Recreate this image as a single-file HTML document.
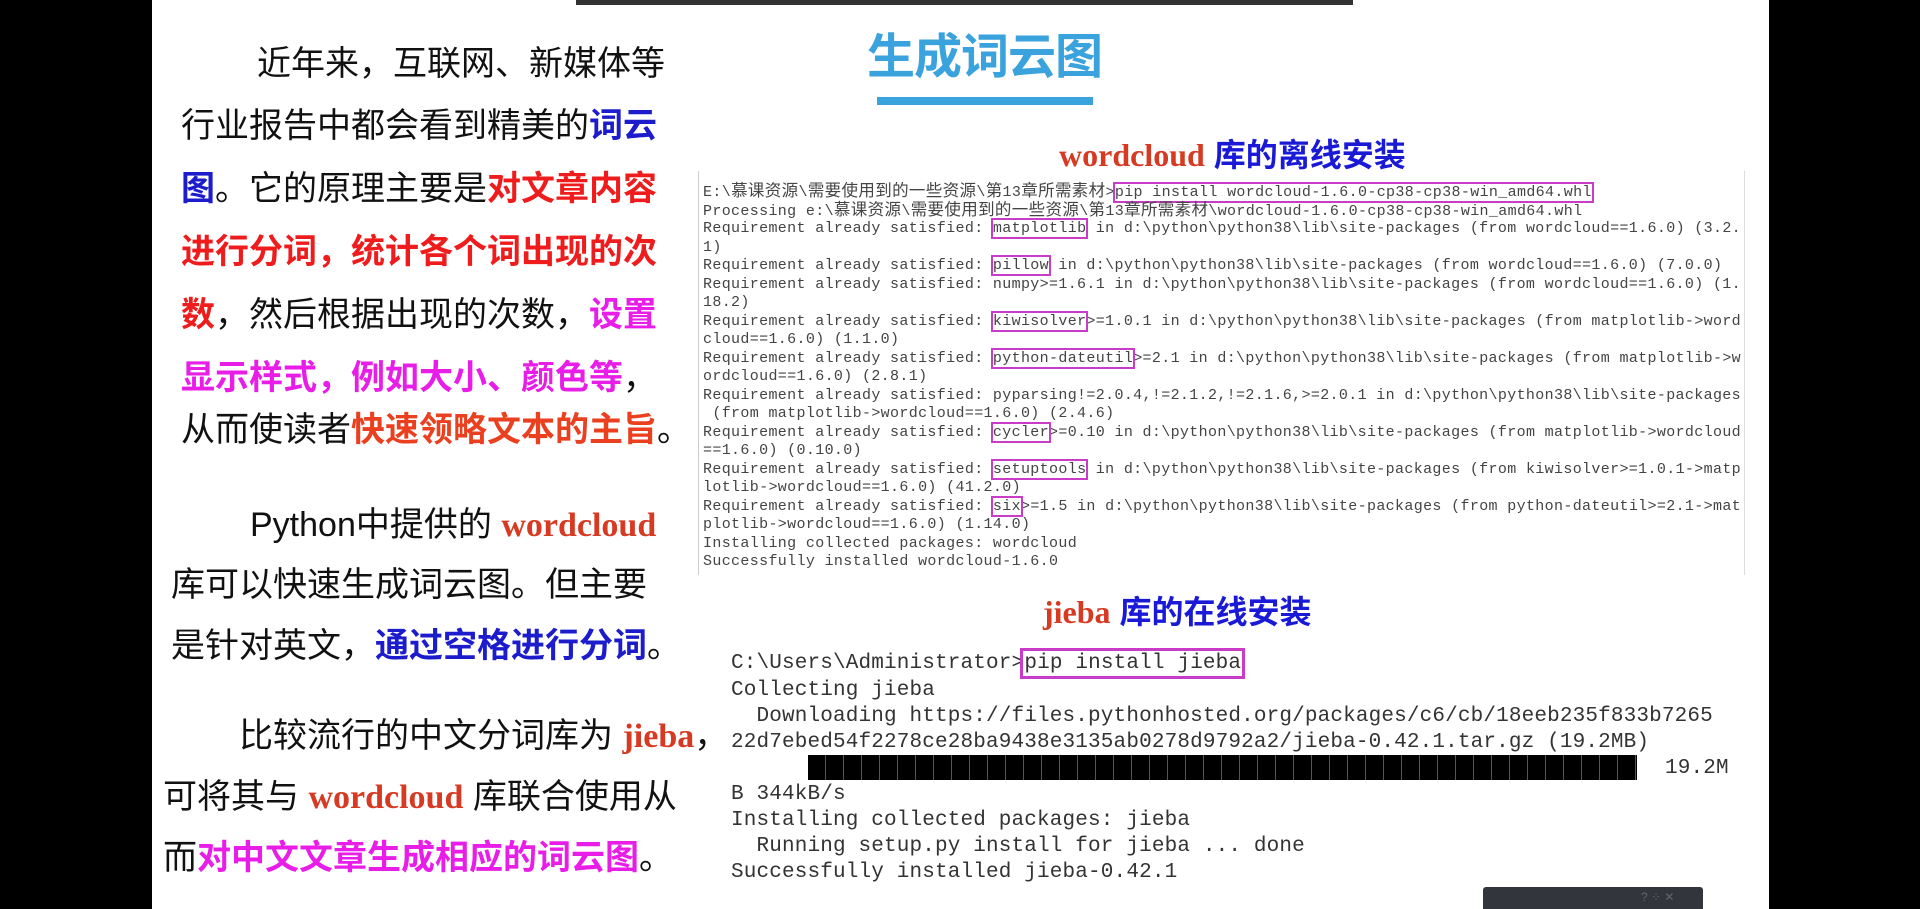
<!DOCTYPE html>
<html><head><meta charset="utf-8"><style>
*{margin:0;padding:0;box-sizing:border-box}
body{width:1920px;height:909px;background:#000;position:relative;overflow:hidden;font-family:"Liberation Sans","Noto Sans CJK SC",sans-serif}
#slide{position:absolute;left:152px;top:0;width:1617px;height:909px;background:#fff}
.abs{position:absolute;white-space:nowrap}
.l{position:absolute;white-space:nowrap;font-size:34px;color:#111;line-height:40px}
.b{color:#1c1ccc;font-weight:bold}
.r{color:#ee1c1c;font-weight:bold}
.m{color:#e81ee8;font-weight:bold}
.o{color:#ea4020;font-weight:bold}
.wc{color:#d63a22;font-weight:bold;font-family:"Liberation Serif",serif}
.t1{position:absolute;left:698px;top:171px;width:1047px;height:404px;border-left:1px solid #ccc;border-right:1px solid #ddd}
.t1 div{font-family:"Liberation Mono",monospace;font-size:15px;letter-spacing:0.35px;line-height:18.55px;color:#444;white-space:pre;position:absolute;left:4px}
.t1 i{font-style:normal;font-size:16.5px}
.bx{outline:2px solid #c83cc8;outline-offset:0}
.t2 div{font-family:"Liberation Mono",monospace;font-size:21px;letter-spacing:0.15px;color:#333;white-space:pre;position:absolute;left:731px;line-height:26px}
</style></head><body>
<div id="slide"></div>
<div class="abs" style="left:576px;top:0;width:777px;height:5px;background:#333"></div>

<div class="abs" style="left:867px;top:28px;font-size:48px;font-weight:bold;color:#3aa2dc;line-height:60px;letter-spacing:-1px">生成词云图</div>
<div class="abs" style="left:877px;top:97px;width:216px;height:8px;background:#3aa2dc"></div>
<div class="abs" style="left:1059px;top:135px;font-size:32px;line-height:40px"><span class="wc">wordcloud</span> <span class="b" style="color:#1a1ad6">库的离线安装</span></div>

<div class="l" style="left:257px;top:44px">近年来，互联网、新媒体等</div>
<div class="l" style="left:181px;top:106px">行业报告中都会看到精美的<span class="b">词云</span></div>
<div class="l" style="left:181px;top:169px"><span class="b">图</span>。它的原理主要是<span class="r">对文章内容</span></div>
<div class="l" style="left:181px;top:232px"><span class="r">进行分词，统计各个词出现的次</span></div>
<div class="l" style="left:181px;top:295px"><span class="r">数</span>，然后根据出现的次数，<span class="m">设置</span></div>
<div class="l" style="left:181px;top:358px"><span class="m">显示样式，例如大小、颜色等</span>，</div>
<div class="l" style="left:181px;top:410px">从而使读者<span class="o">快速领略文本的主旨</span>。</div>

<div class="l" style="left:250px;top:505px">Python中提供的 <span class="wc">wordcloud</span></div>
<div class="l" style="left:171px;top:565px">库可以快速生成词云图。但主要</div>
<div class="l" style="left:171px;top:626px">是针对英文，<span class="b">通过空格进行分词</span>。</div>

<div class="l" style="left:239px;top:716px">比较流行的中文分词库为 <span class="wc">jieba</span>，</div>
<div class="l" style="left:163px;top:777px">可将其与 <span class="wc">wordcloud</span> 库联合使用从</div>
<div class="l" style="left:163px;top:838px">而<span class="m">对中文文章生成相应的词云图</span>。</div>

<div class="t1">
<div style="top:12px">E:\<i>慕课资源</i>\<i>需要使用到的一些资源</i>\<i>第</i>13<i>章所需素材</i>&gt;<span class="bx">pip install wordcloud-1.6.0-cp38-cp38-win_amd64.whl</span></div>
<div style="top:30.5px">Processing e:\<i>慕课资源</i>\<i>需要使用到的一些资源</i>\<i>第</i>13<i>章所需素材</i>\wordcloud-1.6.0-cp38-cp38-win_amd64.whl</div>
<div style="top:49px">Requirement already satisfied: <span class="bx">matplotlib</span> in d:\python\python38\lib\site-packages (from wordcloud==1.6.0) (3.2.</div>
<div style="top:67.5px">1)</div>
<div style="top:86px">Requirement already satisfied: <span class="bx">pillow</span> in d:\python\python38\lib\site-packages (from wordcloud==1.6.0) (7.0.0)</div>
<div style="top:104.5px">Requirement already satisfied: numpy&gt;=1.6.1 in d:\python\python38\lib\site-packages (from wordcloud==1.6.0) (1.</div>
<div style="top:123px">18.2)</div>
<div style="top:141.5px">Requirement already satisfied: <span class="bx">kiwisolver</span>&gt;=1.0.1 in d:\python\python38\lib\site-packages (from matplotlib-&gt;word</div>
<div style="top:160px">cloud==1.6.0) (1.1.0)</div>
<div style="top:178.5px">Requirement already satisfied: <span class="bx">python-dateutil</span>&gt;=2.1 in d:\python\python38\lib\site-packages (from matplotlib-&gt;w</div>
<div style="top:197px">ordcloud==1.6.0) (2.8.1)</div>
<div style="top:215.5px">Requirement already satisfied: pyparsing!=2.0.4,!=2.1.2,!=2.1.6,&gt;=2.0.1 in d:\python\python38\lib\site-packages</div>
<div style="top:234px"> (from matplotlib-&gt;wordcloud==1.6.0) (2.4.6)</div>
<div style="top:252.5px">Requirement already satisfied: <span class="bx">cycler</span>&gt;=0.10 in d:\python\python38\lib\site-packages (from matplotlib-&gt;wordcloud</div>
<div style="top:271px">==1.6.0) (0.10.0)</div>
<div style="top:289.5px">Requirement already satisfied: <span class="bx">setuptools</span> in d:\python\python38\lib\site-packages (from kiwisolver&gt;=1.0.1-&gt;matp</div>
<div style="top:308px">lotlib-&gt;wordcloud==1.6.0) (41.2.0)</div>
<div style="top:326.5px">Requirement already satisfied: <span class="bx">six</span>&gt;=1.5 in d:\python\python38\lib\site-packages (from python-dateutil&gt;=2.1-&gt;mat</div>
<div style="top:345px">plotlib-&gt;wordcloud==1.6.0) (1.14.0)</div>
<div style="top:363.5px">Installing collected packages: wordcloud</div>
<div style="top:382px">Successfully installed wordcloud-1.6.0</div>
</div>

<div class="abs" style="left:1043px;top:592px;font-size:32px;line-height:40px"><span class="wc">jieba</span> <span class="b" style="color:#1a1ad6">库的在线安装</span></div>

<div class="t2">
<div style="top:651px">C:\Users\Administrator&gt;<span style="outline:3px solid #c83cc8;outline-offset:1px">pip install jieba</span></div>
<div style="top:678px">Collecting jieba</div>
<div style="top:704px">  Downloading https://files.pythonhosted.org/packages/c6/cb/18eeb235f833b7265</div>
<div style="top:730px">22d7ebed54f2278ce28ba9438e3135ab0278d9792a2/jieba-0.42.1.tar.gz (19.2MB)</div>
<div style="top:756px;left:1665px">19.2M</div>
<div style="top:782px">B 344kB/s</div>
<div style="top:808px">Installing collected packages: jieba</div>
<div style="top:834px">  Running setup.py install for jieba ... done</div>
<div style="top:860px">Successfully installed jieba-0.42.1</div>
</div>
<div class="abs" style="left:808px;top:755px;width:829px;height:25px;background:repeating-linear-gradient(90deg,#000 0 17px,#555 17px 18px)"></div>

<div class="abs" style="left:1483px;top:887px;width:220px;height:22px;background:#33353d;border-radius:3px 3px 0 0;color:#666;font-size:12px;padding:3px 0 0 158px">? ⁘ ✕</div>
</body></html>
